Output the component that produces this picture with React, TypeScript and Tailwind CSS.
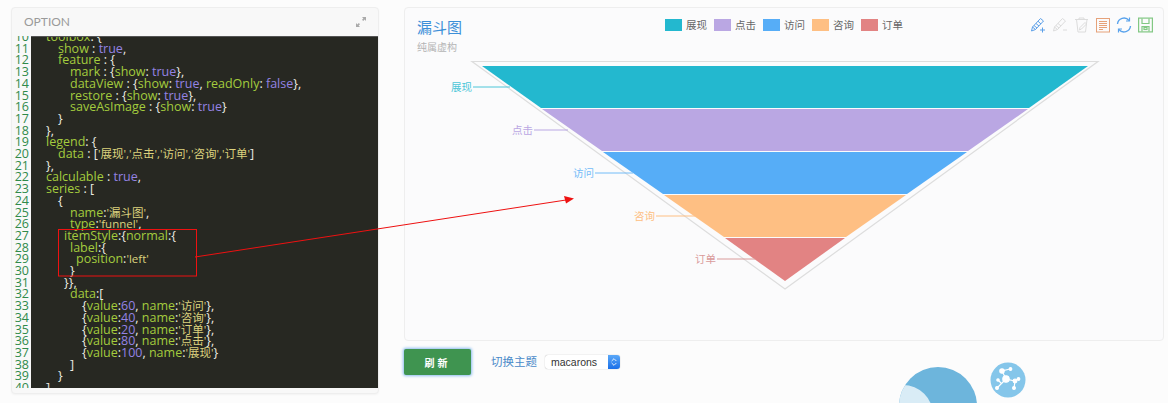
import { ChevronsUpDown } from 'lucide-react';

type Tok = [string, string];

const G = 'text-[#a4cc3e]';
const W = 'text-[#ecece2]';
const P = 'text-[#9483e4]';
const Y = 'text-[#dcd27e] text-[11.5px]';

const CJK = '"Open Sans","Noto Sans CJK SC",sans-serif';

// start line number, indent in px, tokens
const code: { n: number; x: number; t: Tok[] }[] = [
  { n: 10, x: 15, t: [[G, 'toolbox'], [W, ': {']] },
  { n: 11, x: 27, t: [[G, 'show'], [W, ' : '], [P, 'true'], [W, ',']] },
  { n: 12, x: 27, t: [[G, 'feature'], [W, ' : {']] },
  { n: 13, x: 39, t: [[G, 'mark'], [W, ' : {'], [G, 'show'], [W, ': '], [P, 'true'], [W, '},']] },
  { n: 14, x: 39, t: [[G, 'dataView'], [W, ' : {'], [G, 'show'], [W, ': '], [P, 'true'], [W, ', '], [G, 'readOnly'], [W, ': '], [P, 'false'], [W, '},']] },
  { n: 15, x: 39, t: [[G, 'restore'], [W, ' : {'], [G, 'show'], [W, ': '], [P, 'true'], [W, '},']] },
  { n: 16, x: 39, t: [[G, 'saveAsImage'], [W, ' : {'], [G, 'show'], [W, ': '], [P, 'true'], [W, '}']] },
  { n: 17, x: 27, t: [[W, '}']] },
  { n: 18, x: 15, t: [[W, '},']] },
  { n: 19, x: 15, t: [[G, 'legend'], [W, ': {']] },
  { n: 20, x: 27, t: [[G, 'data'], [W, ' : ['], [Y, "'展现','点击','访问','咨询','订单'"], [W, ']']] },
  { n: 21, x: 15, t: [[W, '},']] },
  { n: 22, x: 15, t: [[G, 'calculable'], [W, ' : '], [P, 'true'], [W, ',']] },
  { n: 23, x: 15, t: [[G, 'series'], [W, ' : [']] },
  { n: 24, x: 27, t: [[W, '{']] },
  { n: 25, x: 39, t: [[G, 'name'], [W, ':'], [Y, "'漏斗图'"], [W, ',']] },
  { n: 26, x: 39, t: [[G, 'type'], [W, ':'], [Y, "'funnel'"], [W, ',']] },
  { n: 27, x: 33, t: [[G, 'itemStyle'], [W, ':{'], [G, 'normal'], [W, ':{']] },
  { n: 28, x: 39, t: [[G, 'label'], [W, ':{']] },
  { n: 29, x: 45, t: [[G, 'position'], [W, ':'], [Y, "'left'"]] },
  { n: 30, x: 39, t: [[W, '}']] },
  { n: 31, x: 33, t: [[W, '}},']] },
  { n: 32, x: 39, t: [[G, 'data'], [W, ':[']] },
  { n: 33, x: 51, t: [[W, '{'], [G, 'value'], [W, ':'], [P, '60'], [W, ', '], [G, 'name'], [W, ':'], [Y, "'访问'"], [W, '},']] },
  { n: 34, x: 51, t: [[W, '{'], [G, 'value'], [W, ':'], [P, '40'], [W, ', '], [G, 'name'], [W, ':'], [Y, "'咨询'"], [W, '},']] },
  { n: 35, x: 51, t: [[W, '{'], [G, 'value'], [W, ':'], [P, '20'], [W, ', '], [G, 'name'], [W, ':'], [Y, "'订单'"], [W, '},']] },
  { n: 36, x: 51, t: [[W, '{'], [G, 'value'], [W, ':'], [P, '80'], [W, ', '], [G, 'name'], [W, ':'], [Y, "'点击'"], [W, '},']] },
  { n: 37, x: 51, t: [[W, '{'], [G, 'value'], [W, ':'], [P, '100'], [W, ', '], [G, 'name'], [W, ':'], [Y, "'展现'"], [W, '}']] },
  { n: 38, x: 39, t: [[W, ']']] },
  { n: 39, x: 27, t: [[W, '}']] },
  { n: 40, x: 15, t: [[W, ']']] },
];

const legend = [
  { name: '展现', bg: 'bg-[#23b8cf]' },
  { name: '点击', bg: 'bg-[#baa7e3]' },
  { name: '访问', bg: 'bg-[#56adf7]' },
  { name: '咨询', bg: 'bg-[#febf83]' },
  { name: '订单', bg: 'bg-[#e28383]' },
];

function Editor() {
  return (
    <div className="flex-1 flex overflow-hidden" style={{ fontFamily: CJK }}>
      <div className="w-[19px] shrink-0 bg-[#f8f8f8] text-[#2f8a4a] text-right text-[12.5px] leading-[11.71px] overflow-hidden">
        <div className="-mt-[5px] pr-[2px]">
          {code.map((l) => (
            <div key={l.n} className="h-[11.71px]">{l.n}</div>
          ))}
        </div>
      </div>
      <div className="flex-1 bg-[#272822] border-t border-[#555] text-[12.5px] leading-[11.71px] whitespace-nowrap overflow-hidden">
        <div className="-mt-[6px]">
          {code.map((l) => (
            <div key={l.n} className="h-[11.71px]" style={{ paddingLeft: l.x }}>
              {l.t.map(([c, s], i) => (
                <span key={i} className={c}>{s}</span>
              ))}
            </div>
          ))}
        </div>
      </div>
    </div>
  );
}

function Toolbox() {
  return (
    <div className="flex items-center gap-[6px]">
      <svg width="16" height="16" viewBox="0 0 16 16" fill="none" stroke="#5b9fe8" strokeWidth="1">
        <path d="M1.5 14 L2.5 10 L10.5 1.5 L13.5 4 L5.5 12.5 Z M2.5 10 L5.5 12.5 M4 8.5 L7 11 M6 6.5 L9 9 M8 4.2 L11 7" />
        <path d="M10 13 H15 M12.5 10.5 V15.5" />
      </svg>
      <svg width="16" height="16" viewBox="0 0 16 16" fill="none" stroke="#dcdcdc" strokeWidth="1">
        <path d="M1.5 14 L2.5 10 L10.5 1.5 L13.5 4 L5.5 12.5 Z M2.5 10 L5.5 12.5 M4 8.5 L7 11 M6 6.5 L9 9" />
        <path d="M11 13 H15" />
      </svg>
      <svg width="16" height="16" viewBox="0 0 16 16" fill="none" stroke="#dcdcdc" strokeWidth="1">
        <path d="M1 2.5 H14 M5 2.5 V1 H10 V2.5 M2.5 2.5 L4 15 H11.5 L13 2.5" />
        <path d="M5.5 13 L6 10.5 L11 5.5 L12.5 7 L7.5 12 Z" />
      </svg>
      <svg width="14" height="16" viewBox="0 0 14 16" fill="none" stroke="#e6a27a" strokeWidth="1">
        <rect x="0.5" y="1.5" width="13" height="13.5" />
        <path d="M3 4.5 H11 M3 6.5 H11 M3 8.5 H11 M3 10.5 H11 M3 12.5 H7" />
      </svg>
      <svg width="16" height="16" viewBox="0 0 16 16" fill="none" stroke="#5aa3ec" strokeWidth="1.4">
        <path d="M1.5 7 A6.5 6.5 0 0 1 13 3.5" />
        <path d="M14.5 9 A6.5 6.5 0 0 1 3 12.5" />
        <path d="M13.5 0.5 V4 H10 M2.5 15.5 V12 H6" strokeWidth="1.2" />
      </svg>
      <svg width="15" height="16" viewBox="0 0 15 16" fill="none" stroke="#82c883" strokeWidth="1.2">
        <rect x="0.6" y="1.1" width="13.8" height="13.8" />
        <path d="M4 1.5 V6.5 H11 V1.5 M4 14.5 V9.5 H11 V14.5" />
        <rect x="6" y="10.5" width="3" height="2" />
      </svg>
    </div>
  );
}

function FunnelChart() {
  const bands = [
    { p: '482,66 1088,66 1029,108 541,108', c: '#23b8cf' },
    { p: '542,109 1028,109 968,151 602,151', c: '#baa7e3' },
    { p: '603,152 967,152 907,194 663,194', c: '#56adf7' },
    { p: '664,195 906,195 846,237 724,237', c: '#febf83' },
    { p: '725,238 845,238 785,281', c: '#e28383' },
  ];
  const labels = [
    { t: '展现', x: 451, y: 87, x2: 510, c: '#4cc6d8' },
    { t: '点击', x: 512, y: 130, x2: 568, c: '#baa7e3' },
    { t: '访问', x: 573, y: 173, x2: 633, c: '#73bcf8' },
    { t: '咨询', x: 634, y: 216, x2: 695, c: '#febf83' },
    { t: '订单', x: 695, y: 259, x2: 755, c: '#d99a9a' },
  ];
  return (
    <svg width="758" height="236" viewBox="405 58 758 236">
      <path d="M472 61.5 H1098 L785 289 Z" fill="none" stroke="#dddddd" strokeWidth="1.2" />
      {bands.map((b) => (
        <polygon key={b.c} points={b.p} fill={b.c} />
      ))}
      {labels.map((l) => (
        <g key={l.t}>
          <line x1={l.x + 22} y1={l.y} x2={l.x2} y2={l.y} stroke={l.c} strokeWidth="1" />
          <text x={l.x} y={l.y + 4} fontSize="10.5" fill={l.c} fontFamily='"Noto Sans CJK SC",sans-serif'>{l.t}</text>
        </g>
      ))}
    </svg>
  );
}

export default function App() {
  return (
    <div className="relative h-[403px] w-[1168px] overflow-hidden bg-[#fcfcfc]">
      <div className="flex items-start pl-[11px] pt-[7px]">
        {/* option panel */}
        <div className="w-[368px] h-[387px] flex flex-col rounded-[4px] border border-[#eeeeee] bg-[#f8f8f8] shadow-[0_1px_2px_rgba(0,0,0,0.04)] pb-[5px] pr-[0px]">
          <div className="h-[28px] shrink-0 flex items-center justify-between pl-[12px] pr-[11px]">
            <span className="text-[12px] text-[#9a9a9a]" style={{ fontFamily: '"Lato",sans-serif' }}>OPTION</span>
            <svg width="12" height="12" viewBox="0 0 12 12" fill="#aaaaaa">
              <path d="M7 1 H11 V5 L9.6 3.6 L8.2 5 L7 3.8 L8.4 2.4 Z" />
              <path d="M5 11 H1 V7 L2.4 8.4 L3.8 7 L5 8.2 L3.6 9.6 Z" />
            </svg>
          </div>
          <Editor />
        </div>

        <div className="ml-[25px] flex flex-col">
          {/* chart panel */}
          <div className="w-[760px] h-[334px] rounded-[4px] border border-[#eeeeee] bg-[#fbfbfc] overflow-hidden">
            <div className="h-[50px] flex items-start pt-[8px] pl-[12px] pr-[10px]" style={{ fontFamily: '"Noto Sans CJK SC",sans-serif' }}>
              <div className="w-[248px]">
                <div className="text-[15px] leading-[22px] text-[#3c8fd8]">漏斗图</div>
                <div className="text-[10px] leading-[14px] mt-[2px] text-[#b4b4b4]">纯属虚构</div>
              </div>
              <div className="flex items-center gap-[6px] pt-[3px] w-[365px]">
                {legend.map((l) => (
                  <div key={l.name} className="flex items-center gap-[4px]">
                    <span className={`w-[17px] h-[12px] ${l.bg}`} />
                    <span className="text-[10.5px] leading-[12px] w-[22px] text-[#666666]">{l.name}</span>
                  </div>
                ))}
              </div>
              <div className="pt-[1px]">
                <Toolbox />
              </div>
            </div>
            <FunnelChart />
          </div>

          {/* controls */}
          <div className="flex items-start mt-[8px]">
            <button
              type="button"
              className="w-[67px] h-[26px] rounded-[2px] bg-[#3f9450] text-white text-[10px] font-bold tracking-[3px] shadow-[0_0_3px_1px_#8cbcf0]"
              style={{ fontFamily: '"Noto Sans CJK SC",sans-serif' }}
            >
              刷新
            </button>
            <span className="ml-[20px] mt-[3px] text-[11.5px] leading-[18px] text-[#4a8ac9]" style={{ fontFamily: '"Noto Sans CJK SC",sans-serif' }}>切换主题</span>
            <div className="ml-[8px] mt-[6px] w-[75px] h-[14px] flex rounded-[3px] bg-white shadow-[0_0_1px_rgba(0,0,0,0.4)] overflow-hidden">
              <span className="flex-1 pl-[6px] text-[10.5px] leading-[14px] text-[#333]" style={{ fontFamily: '"Liberation Sans",sans-serif' }}>macarons</span>
              <span className="w-[12px] flex items-center justify-center bg-gradient-to-b from-[#5aa8f8] to-[#1a6fe8]">
                <ChevronsUpDown size={10} color="#ffffff" strokeWidth={2} />
              </span>
            </div>
            <svg width="130" height="41" viewBox="897 362 130 41" className="ml-[277px] mt-[13px] shrink-0">
              <defs>
                <clipPath id="big-circle"><circle cx="938" cy="406" r="39" /></clipPath>
              </defs>
              <circle cx="938" cy="406" r="39" fill="#6db5dc" />
              <circle cx="903" cy="415" r="30" fill="#d9ecf6" clipPath="url(#big-circle)" />
              <circle cx="1008" cy="380" r="17.5" fill="#85c6ea" />
              <g stroke="#ffffff" strokeWidth="1.2" fill="#ffffff">
                <path d="M1006 379 L1002 371 L1010 369 M1006 379 L997 388 M1001 383 L998 380 M1006 379 L1015 381 L1018 379 M1015 381 L1014 388" fill="none" />
                <circle cx="1006" cy="379" r="3.2" />
                <circle cx="1002" cy="371" r="2.2" />
                <circle cx="1010.5" cy="369" r="1.3" />
                <circle cx="997" cy="388" r="1.4" />
                <circle cx="998" cy="380" r="1.2" />
                <circle cx="1015" cy="381" r="1.8" />
                <circle cx="1018.5" cy="379" r="1.3" />
                <circle cx="1014" cy="388" r="1.4" />
              </g>
            </svg>
          </div>
        </div>
      </div>

      {/* red annotation drawn over the screenshot */}
      <svg width="1168" height="403" className="absolute inset-0 pointer-events-none">
        <rect x="58.5" y="229.5" width="138" height="46.5" fill="none" stroke="#ee1111" strokeWidth="1" />
        <line x1="195" y1="257" x2="566" y2="200" stroke="#ee1111" strokeWidth="1" />
        <path d="M574 198.5 L564 196 L566 203.5 Z" fill="#ee1111" />
      </svg>
    </div>
  );
}
